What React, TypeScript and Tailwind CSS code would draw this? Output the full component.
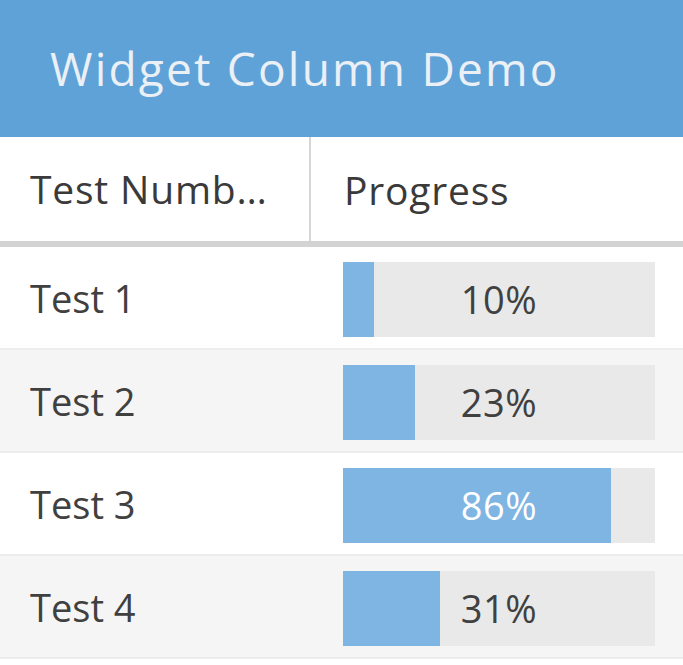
import React from "react";

// row data for the grid
interface ITest {
  name: string;
  progress: number;
}

const tests: ITest[] = [
  { name: "Test 1", progress: 10 },
  { name: "Test 2", progress: 23 },
  { name: "Test 3", progress: 86 },
  { name: "Test 4", progress: 31 },
];

function ProgressBar({ value }: { value: number }) {
  // label sits over the fill once the bar is past the middle
  const onFill = value > 60;
  return (
    <div className="relative w-[312px] h-[75px] bg-[#e9e9e9]">
      <div className="absolute left-0 top-0 bottom-0 bg-[#7fb5e3]" style={{ width: `${value}%` }} />
      <div
        className={`relative h-full flex items-center justify-center tracking-[0.5px] ${
          onFill ? "text-white" : "text-[#404040]"
        }`}
      >
        {value}%
      </div>
    </div>
  );
}

export default function App() {
  return (
    <div className="w-[683px] h-[665px] bg-white overflow-hidden font-['Open_Sans',sans-serif]">
      <div className="h-[137px] bg-[#5fa2d8] flex items-center pl-[50px] text-[#eaf0f5] text-[46px] tracking-[2.2px]">
        Widget Column Demo
      </div>
      <div className="flex h-[110px] border-b-[6px] border-[#d3d3d3] text-[39px] text-[#3a3a3a] tracking-[0.8px]">
        <div className="w-[311px] shrink-0 border-r-[2px] border-[#d6d6d6] flex items-center pl-[30px] pr-[34px] min-w-0">
          <span className="truncate">Test Number</span>
        </div>
        <div className="flex-1 flex items-center pl-[33px] pt-[2px]">Progress</div>
      </div>
      {tests.map((test, idx) => (
        <div
          key={test.name}
          className={`flex h-[103px] border-b-[2px] border-[#ececec] text-[38px] text-[#404040] ${
            idx % 2 === 1 ? "bg-[#f5f5f5]" : "bg-white"
          }`}
        >
          <div className="w-[311px] shrink-0 flex items-center pl-[30px] pt-[2px]">{test.name}</div>
          <div className="flex-1 pl-[32px] pt-[15px]">
            <ProgressBar value={test.progress} />
          </div>
        </div>
      ))}
    </div>
  );
}
